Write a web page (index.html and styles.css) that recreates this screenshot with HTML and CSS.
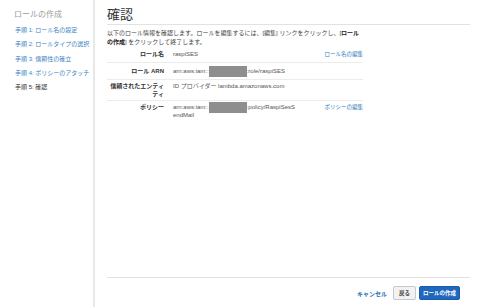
FILE: index.html
```html
<!DOCTYPE html>
<html lang="ja">
<head>
  <meta charset="UTF-8">
  <title>ロールの作成</title>
  <link rel="stylesheet" href="styles.css">
</head>
<body>
  <!-- 手順ナビ -->
  <nav class="sidebar">
    <div class="sidebar-title">ロールの作成</div>
    <ul class="steps">
      <li><a href="#">手順 1: ロール名の設定</a></li>
      <li><a href="#">手順 2: ロールタイプの選択</a></li>
      <li><a href="#">手順 3: 信頼性の確立</a></li>
      <li><a href="#">手順 4: ポリシーのアタッチ</a></li>
      <li class="current">手順 5: 確認</li>
    </ul>
  </nav>

  <main class="main">
    <h1>確認</h1>
    <p class="desc">以下のロール情報を確認します。ロールを編集するには、[編集] リンクをクリックし、[<b>ロールの作成</b>] をクリックして終了します。</p>

    <!-- 確認テーブル -->
    <div class="review">
      <div class="row">
        <div class="label">ロール名</div>
        <div class="value">raspiSES</div>
        <a class="edit" href="#">ロール名の編集</a>
      </div>
      <div class="row">
        <div class="label">ロール ARN</div>
        <div class="value">arn:aws:iam::<span class="mask"></span>:role/raspiSES</div>
        <span></span>
      </div>
      <div class="row">
        <div class="label">信頼されたエンティティ</div>
        <div class="value">ID プロバイダー lambda.amazonaws.com</div>
        <span></span>
      </div>
      <div class="row last">
        <div class="label">ポリシー</div>
        <div class="value">arn:aws:iam::<span class="mask"></span>:policy/RaspiSesSendMail</div>
        <a class="edit" href="#">ポリシーの編集</a>
      </div>
    </div>

    <div class="footer">
      <a class="cancel" href="#">キャンセル</a>
      <button class="btn">戻る</button>
      <button class="btn primary">ロールの作成</button>
    </div>
  </main>
</body>
</html>
```

FILE: styles.css
```css
body {
  margin: 0;
  display: flex;
  height: 307px;
  font-family: 'Liberation Sans', 'Noto Sans CJK JP', sans-serif;
  color: #444;
  background: #fff;
}
a {
  color: #2f7bc0;
  text-decoration: none;
}
.sidebar {
  width: 79px;
  padding-left: 14px;
  border-right: 2px solid #e8e8e8;
  flex-shrink: 0;
  overflow: hidden;
}
.sidebar-title {
  font-size: 8px;
  line-height: 10px;
  color: #9a9a9a;
  margin-top: 10px;
}
.steps {
  list-style: none;
  margin: 6px 0 0 1px;
  padding: 0;
}
.steps li {
  font-size: 6px;
  line-height: 8px;
  margin-bottom: 6.3px;
  white-space: nowrap;
}
.steps li a {
  color: #3b82c4;
}
.steps .current {
  color: #333;
}
.main {
  flex: 1;
  display: flex;
  flex-direction: column;
  padding: 0 10px 0 12px;
}
h1 {
  margin: 0;
  padding-top: 6px;
  font-size: 13px;
  line-height: 17px;
  font-weight: normal;
  color: #333;
  padding-bottom: 1px;
  border-bottom: 1px solid #e2e2e2;
}
.desc {
  width: 256px;
  margin: 4px 0 0;
  font-size: 6px;
  line-height: 9px;
  color: #444;
}
.desc b {
  color: #222;
}
.review {
  width: 256px;
}
.row {
  display: grid;
  grid-template-columns: 57px 123px 1fr;
  column-gap: 9px;
  align-content: center;
  min-height: 12px;
  padding: 2px 0;
  font-size: 6px;
  line-height: 8px;
  border-bottom: 1px solid #ececec;
}
.row:first-child {
  padding-top: 1px;
}
.row.last {
  border-bottom: none;
}
.label {
  text-align: right;
  font-weight: bold;
  color: #333;
}
.value {
  color: #555;
  word-break: break-all;
}
.mask {
  display: inline-block;
  width: 38px;
  height: 11px;
  background: #8e8e8e;
  vertical-align: top;
  margin: -1px 0 -2px;
}
.edit {
  text-align: right;
  font-size: 5.5px;
}
.footer {
  margin-top: auto;
  border-top: 1px solid #e2e2e2;
  padding: 8px 10px 7px 0;
  display: flex;
  justify-content: flex-end;
  align-items: center;
}
.cancel {
  font-size: 6px;
  font-weight: bold;
  color: #2a6fb8;
  margin-right: 6px;
}
.btn {
  font-family: inherit;
  font-size: 5.5px;
  font-weight: bold;
  height: 14px;
  padding: 0 5px;
  border: 1px solid #c8c8c8;
  border-radius: 2px;
  background: #f2f2f2;
  color: #444;
}
.btn.primary {
  margin-left: 3px;
  background: #1f68bd;
  border-color: #1a5ca8;
  color: #fff;
  padding: 0 3px;
}
```
